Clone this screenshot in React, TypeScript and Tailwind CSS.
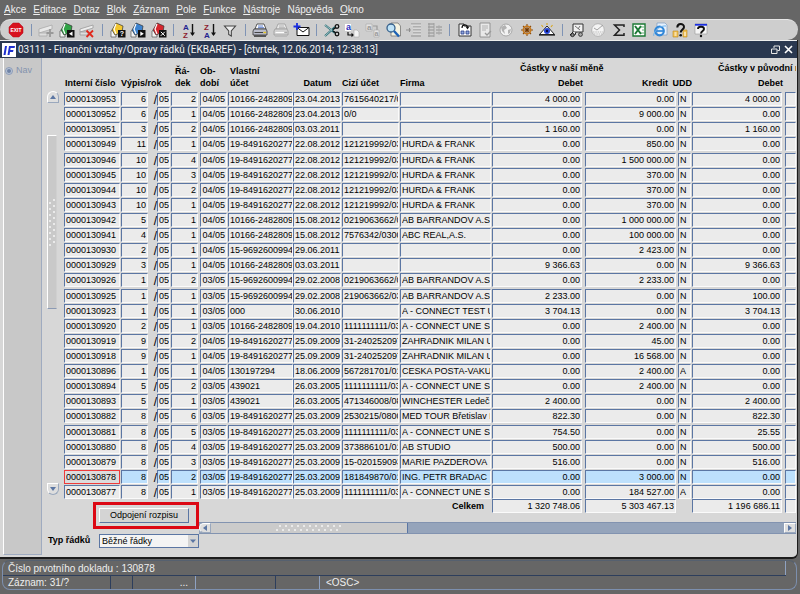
import { ReactNode } from "react";
import clsx from "clsx";

const menu = [
  ["", "A", "kce"],
  ["", "E", "ditace"],
  ["", "D", "otaz"],
  ["", "B", "lok"],
  ["", "Z", "áznam"],
  ["", "P", "ole"],
  ["", "F", "unkce"],
  ["", "N", "ástroje"],
  ["Náp", "o", "věda"],
  ["", "O", "kno"],
];

// id, vypis, radek, obdobi, vlastni ucet, datum, cizi ucet, firma, debet, kredit, udd, puvodni debet
const rows = [
  ["0000130953", "6", "2", "04/05", "10166-2482809", "23.04.2013", "7615640217/0800", "", "4 000.00", "0.00", "N", "4 000.00"],
  ["0000130952", "6", "1", "04/05", "10166-2482809", "23.04.2013", "0/0", "", "0.00", "9 000.00", "N", "0.00"],
  ["0000130951", "3", "2", "04/05", "10166-2482809", "03.03.2011", "", "", "1 160.00", "0.00", "N", "1 160.00"],
  ["0000130949", "11", "1", "04/05", "19-8491620277", "22.08.2012", "121219992/0300", "HURDA & FRANK", "0.00", "850.00", "N", "0.00"],
  ["0000130946", "10", "4", "04/05", "19-8491620277", "22.08.2012", "121219992/0300", "HURDA & FRANK", "0.00", "1 500 000.00", "N", "0.00"],
  ["0000130945", "10", "3", "04/05", "19-8491620277", "22.08.2012", "121219992/0300", "HURDA & FRANK", "0.00", "370.00", "N", "0.00"],
  ["0000130944", "10", "2", "04/05", "19-8491620277", "22.08.2012", "121219992/0300", "HURDA & FRANK", "0.00", "370.00", "N", "0.00"],
  ["0000130943", "10", "1", "04/05", "19-8491620277", "22.08.2012", "121219992/0300", "HURDA & FRANK", "0.00", "370.00", "N", "0.00"],
  ["0000130942", "5", "1", "04/05", "10166-2482809", "15.08.2012", "0219063662/0300", "AB BARRANDOV A.S.", "0.00", "1 000 000.00", "N", "0.00"],
  ["0000130941", "4", "1", "04/05", "10166-2482809", "15.08.2012", "7576342/0300", "ABC REAL,A.S.", "0.00", "100 000.00", "N", "0.00"],
  ["0000130930", "2", "1", "04/05", "15-9692600994", "29.06.2011", "", "", "0.00", "2 423.00", "N", "0.00"],
  ["0000130929", "3", "1", "04/05", "10166-2482809", "03.03.2011", "", "", "9 366.63", "0.00", "N", "9 366.63"],
  ["0000130926", "1", "2", "03/05", "15-9692600994", "29.02.2008", "0219063662/0300", "AB BARRANDOV A.S.", "0.00", "2 233.00", "N", "0.00"],
  ["0000130925", "1", "1", "03/05", "15-9692600994", "29.02.2008", "219063662/0300", "AB BARRANDOV A.S.", "2 233.00", "0.00", "N", "100.00"],
  ["0000130923", "1", "1", "03/05", "000", "30.06.2010", "", "A - CONNECT TEST UNE", "3 704.13", "0.00", "N", "3 704.13"],
  ["0000130920", "2", "1", "03/05", "10166-2482809", "19.04.2010", "1111111111/0300", "A - CONNECT UNE SPO", "0.00", "2 400.00", "N", "0.00"],
  ["0000130919", "9", "2", "04/05", "19-8491620277", "25.09.2009", "31-2402520970", "ZAHRADNIK MILAN UNG", "0.00", "45.00", "N", "0.00"],
  ["0000130918", "9", "1", "04/05", "19-8491620277", "25.09.2009", "31-2402520970", "ZAHRADNIK MILAN UNG", "0.00", "16 568.00", "N", "0.00"],
  ["0000130896", "1", "1", "04/05", "130197294", "18.06.2009", "567281701/0100", "CESKA POSTA-VAKUS", "0.00", "2 400.00", "A", "0.00"],
  ["0000130894", "5", "2", "03/05", "439021", "26.03.2005", "1111111111/0300", "A - CONNECT UNE SPO", "0.00", "2 400.00", "N", "0.00"],
  ["0000130893", "5", "1", "03/05", "439021", "26.03.2005", "471346008/0800", "WINCHESTER Ledeč", "2 400.00", "0.00", "N", "2 400.00"],
  ["0000130882", "8", "6", "03/05", "19-8491620277", "25.03.2009", "2530215/0800", "MED TOUR Břetislav Le", "822.30", "0.00", "N", "822.30"],
  ["0000130881", "8", "5", "03/05", "19-8491620277", "25.03.2009", "1111111111/0300", "A - CONNECT UNE SPO", "754.50", "0.00", "N", "25.55"],
  ["0000130880", "8", "4", "03/05", "19-8491620277", "25.03.2009", "373886101/0100", "AB STUDIO", "500.00", "0.00", "N", "500.00"],
  ["0000130879", "8", "3", "03/05", "19-8491620277", "25.03.2009", "15-0201590930", "MARIE PAZDEROVA", "516.00", "0.00", "N", "516.00"],
  ["0000130878", "8", "2", "03/05", "19-8491620277", "25.03.2009", "181849870/0100", "ING. PETR BRADAC", "0.00", "3 000.00", "N", "0.00"],
  ["0000130877", "8", "1", "03/05", "19-8491620277", "25.03.2009", "1111111111/0300", "A - CONNECT UNE SPO", "0.00", "184 527.00", "A", "0.00"],
];

const SELECTED = "0000130878";

const Svg = ({ children }: { children: ReactNode }) => (
  <svg viewBox="0 0 16 16" className="w-4 h-4 overflow-visible" aria-hidden="true">
    {children}
  </svg>
);

// folded card with a small black badge in the corner
const Card = ({ fill, badge }: { fill: string; badge: ReactNode }) => (
  <Svg>
    <path d="M1 9L4 7L6 9V15H1Z" fill="#f4f4f4" stroke="#555" strokeWidth=".7" />
    <path d="M2 8L6 1L13 4L12 10L5 13Z" fill={fill} stroke="#333" strokeWidth=".7" />
    <path d="M6 2L4 7L6 12" stroke="#fff" strokeWidth="1.2" fill="none" />
    <rect x="8" y="8" width="7.5" height="7.5" fill="#111" />
    {badge}
  </Svg>
);

const Sort = ({ top, bottom }: { top: string; bottom: string }) => (
  <Svg>
    <text x="2" y="8" fontSize="8" fontWeight="bold" fill={top === "A" ? "#23238e" : "#8c1b2f"}>{top}</text>
    <text x="2" y="15.5" fontSize="8" fontWeight="bold" fill={top === "A" ? "#8c1b2f" : "#23238e"}>{bottom}</text>
    <path d="M11.5 2V13" stroke="#111" strokeWidth="1.4" />
    <path d="M9 10.5H14L11.5 14Z" fill="#111" />
  </Svg>
);

const Printer = ({ off }: { off?: boolean }) => {
  const line = off ? "#9a9a9a" : "#333";
  return (
    <Svg>
      <path d="M5 2H12L14 7H3Z" fill={off ? "#e6e6e6" : "#fff"} stroke={line} strokeWidth=".8" />
      <path d="M6 4H11M6 5.7H12" stroke={off ? "#aaa" : "#3a62c4"} strokeWidth=".8" />
      <path d="M2 7H14L15 9V13H1V9Z" fill={off ? "#d2d2d2" : "#b9bccb"} stroke={line} strokeWidth=".8" />
      <path d="M2 13H14V15H2Z" fill={off ? "#bbb" : "#555"} />
      <path d="M2.5 10.5H11" stroke={off ? "#fff" : "#444"} />
      <path d="M11.5 10.5H14" stroke={off ? "#aaa" : "#e2c21c"} strokeWidth="1.4" />
    </Svg>
  );
};

const tools: { name: string; icon: ReactNode }[][] = [
  [
    {
      name: "Exit",
      icon: (
        <Svg>
          <path d="M5 1H11L15 5V11L11 15H5L1 11V5Z" fill="#d8101e" stroke="#b00a16" strokeWidth=".5" />
          <text x="8" y="10" fontSize="5" fontWeight="bold" textAnchor="middle" fill="#fff">EXIT</text>
        </Svg>
      ),
    },
  ],
  [
    {
      name: "Nový záznam",
      icon: (
        <Svg>
          <path d="M1 7L14 3V7L1 11Z" fill="#e9e9e9" stroke="#aaa" strokeWidth=".8" />
          <path d="M1 11H9V14H1Z" fill="#dedede" stroke="#aaa" strokeWidth=".8" />
          <path d="M12 7V15M8.5 11H15.5" stroke="#999" strokeWidth="1.8" />
        </Svg>
      ),
    },
    { name: "Uložit", icon: <Card fill="#2fa345" badge={<path d="M13.5 9.5V14L10 11.8Z" fill="#fff" />} /> },
    {
      name: "Smazat",
      icon: (
        <Svg>
          <path d="M1 7L14 3V6L1 10Z" fill="#eee" stroke="#999" strokeWidth=".8" />
          <path d="M1 10H9V13H1Z" fill="#dedede" stroke="#999" strokeWidth=".8" />
          <path d="M7.5 8.5L14 15M14 8.5L7.5 15" stroke="#e0281c" strokeWidth="1.8" />
        </Svg>
      ),
    },
  ],
  [
    {
      name: "Zadat dotaz",
      icon: <Card fill="#f3c62e" badge={<text x="11.8" y="14.4" fontSize="7" fontWeight="bold" textAnchor="middle" fill="#fff">?</text>} />,
    },
    { name: "Provést dotaz", icon: <Card fill="#3d83cf" badge={<path d="M10.3 9.5V14L13.8 11.8Z" fill="#fff" />} /> },
    { name: "Zrušit dotaz", icon: <Card fill="#d6262d" badge={<path d="M9.8 9.8L13.8 13.8M13.8 9.8L9.8 13.8" stroke="#fff" />} /> },
  ],
  [
    { name: "Seřadit vzestupně", icon: <Sort top="A" bottom="Z" /> },
    { name: "Seřadit sestupně", icon: <Sort top="Z" bottom="A" /> },
    {
      name: "Filtr",
      icon: (
        <Svg>
          <path d="M2.5 4H13.5L9.3 9V14L6.7 12.5V9Z" fill="#eee" stroke="#444" strokeWidth="1.1" />
        </Svg>
      ),
    },
  ],
  [
    { name: "Tisk", icon: <Printer /> },
    { name: "Tisk sestavy", icon: <Printer off /> },
    {
      name: "Pošta",
      icon: (
        <Svg>
          <path d="M3 5.5H15V13.5H3Z" fill="#fff" stroke="#111" />
          <path d="M3 5.5L9 10L15 5.5" fill="none" stroke="#111" />
          <path d="M3 1V8M-.5 4.5H6.5" stroke="#1a2fe0" strokeWidth="1.8" />
        </Svg>
      ),
    },
  ],
  [
    {
      name: "Vyjmout",
      icon: (
        <Svg>
          <path d="M1 3L11 11M1 14L11 5" stroke="#2b6f77" strokeWidth="2" />
          <path d="M1 3L8 8.5M1 14L8 7.5" stroke="#e8f4f4" strokeWidth=".6" fill="none" />
          <path d="M9 9L12 11M9 7.5L12 5.5" stroke="#111" strokeWidth="1.4" />
          <circle cx="13" cy="4.5" r="1.8" fill="none" stroke="#111" strokeWidth="1.3" />
          <circle cx="13" cy="12" r="1.8" fill="none" stroke="#111" strokeWidth="1.3" />
        </Svg>
      ),
    },
    {
      name: "Kopírovat",
      icon: (
        <Svg>
          <path d="M1 2H7V9H1Z" fill="#fff" />
          <text x="2" y="8" fontSize="9" fontWeight="bold" fill="#2a2fc0">a</text>
          <path d="M4 10V13H8" stroke="#111" fill="none" strokeWidth="1.2" />
          <path d="M7.5 10.8V15.2L10 13Z" fill="#111" />
          <path d="M10 8H13L15 10V15H10Z" fill="#f4f4f4" stroke="#aaa" strokeWidth=".6" />
        </Svg>
      ),
    },
    {
      name: "Vložit",
      icon: (
        <Svg>
          <path d="M1 2H7V9H1Z" fill="#e4e4e4" stroke="#aaa" strokeWidth=".6" />
          <text x="2" y="8" fontSize="8" fontWeight="bold" fill="#999">a</text>
          <path d="M8 4H12V8" stroke="#999" fill="none" strokeWidth="1.2" />
          <path d="M9 8H14V15H9Z" fill="#e4e4e4" stroke="#aaa" strokeWidth=".6" />
          <text x="9.5" y="14" fontSize="7" fontWeight="bold" fill="#999">a</text>
        </Svg>
      ),
    },
    {
      name: "Hledat",
      icon: (
        <Svg>
          <path d="M6 1H13L15.5 4V14H6Z" fill="#f6f4e2" stroke="#777" strokeWidth=".8" />
          <circle cx="6" cy="6" r="4" fill="#bfe3f7" stroke="#37618c" strokeWidth="1.3" />
          <path d="M9 9L14 14.5" stroke="#1d62b5" strokeWidth="2.4" />
        </Svg>
      ),
    },
    {
      name: "Odsadit",
      icon: (
        <Svg>
          <path d="M5 2H15M7 5H15M7 8H15M7 11H15M5 14H15" stroke="#8f8f8f" strokeWidth="1.1" />
          <path d="M0 8H5M3.5 6V10" stroke="#8f8f8f" strokeWidth="1.1" />
          <path d="M5 3H15M7 6H15M7 9H15M7 12H15" stroke="#f1f1f1" strokeWidth=".6" />
        </Svg>
      ),
    },
    {
      name: "Předsadit",
      icon: (
        <Svg>
          <path d="M1 2H7M1 5H7M1 8H7M1 11H7M1 14H7" stroke="#8f8f8f" strokeWidth="1.1" />
          <path d="M2 1V15M7 1V15" stroke="#999" strokeWidth=".8" />
          <path d="M9 5H15M9 8H15M9 11H15" stroke="#8f8f8f" strokeWidth="1.1" />
          <path d="M12 3V13" stroke="#aaa" strokeWidth=".8" />
        </Svg>
      ),
    },
  ],
  [
    {
      name: "Seznam hodnot",
      icon: (
        <Svg>
          <path d="M2 2H7V4H14V14H2Z" fill="#fff" stroke="#333" />
          <path d="M4 9H7V12H4ZM9 9H12V12H9Z" fill="#8ea6dc" stroke="#2c3e86" strokeWidth=".8" />
          <path d="M5 6C5 2 10 2 10.5 5" stroke="#111" strokeWidth="1.2" fill="none" />
          <path d="M8.5 4.5H12.5L10.5 7.5Z" fill="#111" />
        </Svg>
      ),
    },
    {
      name: "Poznámka",
      icon: (
        <Svg>
          <path d="M3 1H13V15H3Z" fill="#e9e9e9" stroke="#8d8d8d" strokeWidth=".9" />
          <path d="M5 4H11M5 6H11M5 8H9" stroke="#aaa" strokeWidth=".9" />
          <path d="M8 11L10 13L14 9" stroke="#999" strokeWidth="1.3" fill="none" />
        </Svg>
      ),
    },
    {
      name: "Web",
      icon: (
        <Svg>
          <circle cx="8" cy="8" r="6" fill="#f2f2f2" stroke="#a2a2a2" strokeWidth=".9" />
          <path d="M3 5L7 3L9 6L6 8L7 12L4 9ZM10 8L13 7L12 11L10 12Z" fill="#b2b2b2" />
        </Svg>
      ),
    },
    {
      name: "Navigátor",
      icon: (
        <Svg>
          <path d="M8 2V14M2 8H14M4 4L12 12M12 4L4 12" stroke="#8a4a0c" strokeWidth="1.1" />
          <circle cx="8" cy="8" r="3.8" fill="none" stroke="#c87a1c" strokeWidth="1.4" />
          <circle cx="8" cy="8" r="1.2" fill="#6a3606" />
        </Svg>
      ),
    },
    {
      name: "Náhled",
      icon: (
        <Svg>
          <path d="M.5 12.5L8 4L15.5 12.5Z" fill="#fff" stroke="#222" />
          <circle cx="8" cy="9" r="3" fill="#2747d8" />
          <circle cx="8" cy="9" r="1.2" fill="#0a0a40" />
          <path d="M8 3V1M4 5L2.5 3M12 5L13.5 3" stroke="#d9a81d" strokeWidth="1.1" />
          <path d="M0 13H16" stroke="#222" strokeWidth="1.3" />
        </Svg>
      ),
    },
  ],
  [
    {
      name: "Doprava",
      icon: (
        <Svg>
          <path d="M4 2H14V10H4Z" fill="#f1f1f1" stroke="#333" />
          <path d="M6 4L11 8M11 4L9 7" stroke="#666" strokeWidth=".9" />
          <path d="M4 10L1 13H6L7 10" fill="#ddd" stroke="#222" />
          <circle cx="3.5" cy="13" r="1.7" fill="#888" stroke="#111" strokeWidth=".8" />
          <circle cx="11.5" cy="12.5" r="1.9" fill="#aaa" stroke="#222" strokeWidth=".8" />
        </Svg>
      ),
    },
    {
      name: "Schválit",
      icon: (
        <Svg>
          <circle cx="8" cy="8" r="6.3" fill="#f4f4f4" stroke="#aaa" strokeWidth=".8" />
          <path d="M4 6L7 8L13 3" stroke="#a2a2a2" fill="none" />
          <path d="M3 10H13M4 12H12" stroke="#bbb" strokeWidth="1" strokeDasharray="1.5 .8" />
        </Svg>
      ),
    },
    {
      name: "Součet",
      icon: (
        <Svg>
          <path d="M13 5V3H3.5L8.5 8L3.5 13.3H13V11" fill="none" stroke="#222" strokeWidth="1.5" />
        </Svg>
      ),
    },
    {
      name: "Excel",
      icon: (
        <Svg>
          <path d="M2 2H14V14H2Z" fill="#fff" stroke="#1c7a36" strokeWidth="1.4" />
          <path d="M4 4L10 12M10 4L4 12" stroke="#1c7a36" strokeWidth="2" />
          <path d="M10 5H13M11 8H13M10 11H13" stroke="#63ad74" />
        </Svg>
      ),
    },
    {
      name: "Internet",
      icon: (
        <Svg>
          <path d="M5 1H13L15 3V13H5Z" fill="#e6f0fb" stroke="#7d9cc0" strokeWidth=".7" />
          <circle cx="7.5" cy="9" r="4.3" fill="none" stroke="#3187d8" strokeWidth="2.2" />
          <path d="M4 9H11.5" stroke="#3187d8" strokeWidth="1.7" />
          <path d="M2 14C0 12 7 3 14 4" fill="none" stroke="#6db3ee" strokeWidth="1" />
        </Svg>
      ),
    },
    {
      name: "Nápověda firmy",
      icon: (
        <Svg>
          <path d="M1 9H6V15H1ZM11 8H15V15H11Z" fill="#f0c053" stroke="#c08a20" strokeWidth=".6" />
          <path d="M2.5 11H4.5M2.5 13H4.5M12 11H14M12 13H14" stroke="#fff" />
          <path d="M5.3 5.5C5.3 1 12 1 12 5C12 7.5 8.7 7.5 8.7 10.5" fill="none" stroke="#111" strokeWidth="2" />
          <circle cx="8.7" cy="13.3" r="1.3" fill="#111" />
        </Svg>
      ),
    },
    {
      name: "Nápověda okna",
      icon: (
        <Svg>
          <path d="M2 2H14V12H2Z" fill="#f5f5f5" stroke="#999" strokeWidth=".6" />
          <path d="M2 2.8H14" stroke="#1a2fe0" strokeWidth="1.8" />
          <path d="M5 7C5 4 11 4 11 7C11 9 8 9 8 11.5" fill="none" stroke="#111" strokeWidth="1.9" />
          <circle cx="8" cy="14" r="1.2" fill="#111" />
        </Svg>
      ),
    },
  ],
];

type FieldProps = { label: string; value: string; right?: boolean; active?: boolean; current?: boolean };

function Field({ label, value, right, active, current }: FieldProps) {
  return (
    <input
      aria-label={label}
      defaultValue={value}
      className={clsx(
        "block w-full h-[14px] border rounded-none outline-none",
        right ? "text-right pr-px" : "pl-px",
        current
          ? "bg-[#dcdcdc] border-[#ee3a3a]"
          : "border-t-[#5b76a3] border-l-[#5b76a3] border-r-[#fafafa] border-b-[#fafafa]",
        !current && (active ? "bg-[#bde0fc]" : "bg-[#ebebeb]")
      )}
    />
  );
}

const Arrow = ({ d }: { d: string }) => (
  <svg viewBox="0 0 8 8" className="w-2 h-2" aria-hidden="true">
    <path d={d} fill="#5b76a3" />
  </svg>
);

const scrollButton =
  "flex items-center justify-center bg-[#dedede] border border-[#9aa8bd] border-t-white border-l-white shrink-0";

function Grips({ wide }: { wide?: boolean }) {
  const dots = wide ? 11 : 8;
  return (
    <svg
      viewBox={wide ? "0 0 66 8" : "0 0 8 48"}
      className={wide ? "w-[66px] h-2" : "w-2 h-12"}
      aria-hidden="true"
    >
      {Array.from({ length: dots }).map((_, i) =>
        wide ? (
          <g key={i} fill="#f4f4f4">
            <circle cx={i * 6 + 4} cy="2" r="1" />
            <circle cx={i * 6 + 1} cy="6" r="1" />
          </g>
        ) : (
          <g key={i} fill="#f4f4f4">
            <circle cx="6" cy={i * 6 + 2} r="1" />
            <circle cx="2" cy={i * 6 + 5} r="1" />
          </g>
        )
      )}
    </svg>
  );
}

function RecordsTable() {
  return (
    <table className="table-fixed w-full border-collapse h-[437px]">
      <colgroup>
        <col className="w-[57px]" />
        <col className="w-[28px]" />
        <col className="w-[8px]" />
        <col className="w-[14px]" />
        <col className="w-[29px]" />
        <col className="w-[28px]" />
        <col className="w-[65px]" />
        <col className="w-[49px]" />
        <col className="w-[58px]" />
        <col className="w-[92px]" />
        <col className="w-[93px]" />
        <col className="w-[93px]" />
        <col className="w-[14px]" />
        <col className="w-[93px]" />
        <col />
      </colgroup>
      <thead className="text-left align-bottom leading-[12px] whitespace-nowrap">
        <tr className="h-[14px]">
          <th rowSpan={2} className="pb-[2px] pl-px">Interní číslo</th>
          <th rowSpan={2} colSpan={3} className="pb-[2px]">Výpis/rok</th>
          <th rowSpan={2} className="pb-[2px] pl-1">Řá-<br />dek</th>
          <th rowSpan={2} className="pb-[2px]">Ob-<br />dobí</th>
          <th rowSpan={2} className="pb-[2px] pl-[2px]">Vlastní<br />účet</th>
          <th rowSpan={2} className="pb-[2px] text-center">Datum</th>
          <th rowSpan={2} className="pb-[2px]">Cizí účet</th>
          <th rowSpan={2} className="pb-[2px]">Firma</th>
          <th colSpan={2} className="pl-7 align-top">Částky v naší měně</th>
          <th rowSpan={2} className="pb-[2px]">
            <div className="flex justify-end">UDD</div>
          </th>
          <th colSpan={2} className="pl-[26px] align-top">Částky v původní měně</th>
        </tr>
        <tr className="h-[15px]">
          <th className="pb-[2px] text-right pr-[2px]">Debet</th>
          <th className="pb-[2px] text-right pr-[10px]">Kredit</th>
          <th className="pb-[2px] text-right pr-[2px]">Debet</th>
          <th></th>
        </tr>
      </thead>
      <tbody>
        {rows.map((r) => {
          const active = r[0] === SELECTED;
          return (
            <tr key={r[0]} className="align-bottom">
              <td className="pr-px"><Field label="Interní číslo" value={r[0]} active={active} current={active} /></td>
              <td className="pr-px"><Field label="Výpis" value={r[1]} right active={active} /></td>
              <td className="text-right text-xs leading-[12px]">/</td>
              <td className="pr-px"><Field label="Rok" value="05" active={active} /></td>
              <td className="pr-[2px]"><Field label="Řádek" value={r[2]} right active={active} /></td>
              <td className="pr-px"><Field label="Období" value={r[3]} right active={active} /></td>
              <td><Field label="Vlastní účet" value={r[4]} active={active} /></td>
              <td className="pr-px"><Field label="Datum" value={r[5]} active={active} /></td>
              <td className="pr-px"><Field label="Cizí účet" value={r[6]} active={active} /></td>
              <td className="pr-px"><Field label="Firma" value={r[7]} active={active} /></td>
              <td className="pr-[3px]"><Field label="Debet" value={r[8]} right active={active} /></td>
              <td className="pr-[2px]"><Field label="Kredit" value={r[9]} right active={active} /></td>
              <td className="pr-px"><Field label="UDD" value={r[10]} active={active} /></td>
              <td className="pr-[3px]"><Field label="Debet v původní měně" value={r[11]} right active={active} /></td>
              <td><Field label="Kredit v původní měně" value="" active={active} /></td>
            </tr>
          );
        })}
      </tbody>
    </table>
  );
}

export default function App() {
  return (
    <div className="min-h-screen bg-[#666666] font-['Liberation_Sans',Arial,sans-serif] text-[9px] text-black overflow-hidden">
      <nav className="flex gap-[7px] h-[19px] items-center pl-1 text-[10px] text-[#f0f0f0]">
        {menu.map(([before, key, after]) => (
          <button key={before + key + after} type="button" className="whitespace-nowrap">
            {before}
            <span className="underline">{key}</span>
            {after}
          </button>
        ))}
      </nav>

      {/* toolbar */}
      <div className="bg-[#cecece] h-[21px] rounded-xl border-t border-[#e6e6e6] mr-[2px] pl-2 flex items-center">
        <div className="flex w-[701px] justify-between items-center">
          {tools.map((group, i) => [
            i > 0 && (
              <span key={"sep" + i} className="w-[5px] flex justify-center">
                <span className="w-px h-3 bg-[#7e93b5]" />
              </span>
            ),
            ...group.map((tool) => (
              <button key={tool.name} type="button" aria-label={tool.name}>
                {tool.icon}
              </button>
            )),
          ])}
        </div>
      </div>

      {/* window */}
      <div className="mr-[2px] border-b-2 border-r border-[#1c1c1c] rounded-br-md bg-[#d7d7d7]">
        <div className="flex items-center h-[18px] bg-[#2a3850] border-t border-[#eeeeee] text-[#f2f2f2] text-[10px] font-['Roboto',Arial,sans-serif] pl-[2px] pr-1">
          <svg viewBox="0 0 14 14" className="w-[14px] h-[14px] mr-[2px] shrink-0" aria-hidden="true">
            <rect width="14" height="14" fill="#fff" />
            <path d="M3 3H5L3.5 12H1.5ZM7 3H13L12.6 5H8.6L8.3 7H11.5L11 9H8L7.5 12H5.5Z" fill="#1d2fd0" />
          </svg>
          <h1 className="flex-1 whitespace-nowrap">
            03111 - Finanční vztahy/Opravy řádků (EKBAREF) - [čtvrtek, 12.06.2014; 12:38:13]
          </h1>
          <button type="button" aria-label="Obnovit" className="mr-1">
            <svg viewBox="0 0 9 9" className="w-[9px] h-[9px]" fill="none" stroke="#e8e8e8" aria-hidden="true">
              <path d="M3 3V1H8.5V5.5H6.5M.5 4H6V8.5H.5Z" />
            </svg>
          </button>
          <button type="button" aria-label="Zavřít">
            <svg viewBox="0 0 9 9" className="w-[9px] h-[9px]" stroke="#fff" strokeWidth="1.6" aria-hidden="true">
              <path d="M1 1L8 8M8 1L1 8" />
            </svg>
          </button>
        </div>

        <div className="flex">
          <aside className="w-[42px] shrink-0 pl-[3px] pb-[2px] flex">
            <div className="flex-1 bg-[#c8c8c8] border-l border-l-white border-r border-r-[#9fabc0] border-b border-b-[#9fabc0]">
              <button type="button" className="flex items-center gap-[3px] mt-[6px] ml-px text-[#8493ae]">
                <svg viewBox="0 0 8 8" className="w-2 h-2" aria-hidden="true">
                  <circle cx="4" cy="4" r="3.5" fill="#b9c4d6" stroke="#8d9cb8" />
                  <circle cx="4" cy="4" r="2" fill="#6f83a6" />
                </svg>
                Nav
              </button>
            </div>
          </aside>

          <main className="flex-1 min-w-0 pt-1 pl-[5px] pb-[9px]">
            <div className="flex pr-px">
              {/* vertical scrollbar */}
              <div className="w-[17px] shrink-0 pt-[29px] flex flex-col">
                <button type="button" aria-label="Nahoru" className={clsx(scrollButton, "w-3 h-3 rounded-t-md")}>
                  <Arrow d="M1 6L4 2L7 6Z" />
                </button>
                <div className="flex-1 pt-8">
                  <div className="w-[10px] h-[174px] bg-[#c9c9c9] border border-l-white border-t-white border-r-[#d0d0d0] border-b-[#8b9ab4] flex items-center justify-center">
                    <Grips />
                  </div>
                </div>
                <button type="button" aria-label="Dolů" className={clsx(scrollButton, "w-3 h-3 mb-1 rounded-b-md")}>
                  <Arrow d="M1 2H7L4 6Z" />
                </button>
              </div>
              <div className="flex-1 min-w-0 overflow-hidden">
                <RecordsTable />
              </div>
            </div>

            <div className="flex pr-px">
              <div className="w-[152px] shrink-0 pt-[3px]">
                <div className="ml-[46px] border-[3px] border-[#dc0814] p-[3px]">
                  <button
                    type="button"
                    className="block w-[90px] h-[15px] bg-[#d4d4d4] border border-t-white border-l-white border-r-[#5b76a3] border-b-[#5b76a3] text-center"
                  >
                    Odpojení rozpisu
                  </button>
                </div>
                <div className="flex items-center mt-[5px]">
                  <label htmlFor="typ" className="w-[52px] shrink-0 pl-px font-bold whitespace-nowrap">
                    Typ řádků
                  </label>
                  <div className="relative flex-1">
                    <select
                      id="typ"
                      className="appearance-none block w-full h-[14px] bg-[#f4f4f4] border border-[#5b76a3] pl-[2px] rounded-none"
                    >
                      <option>Běžné řádky</option>
                    </select>
                    <span className="absolute right-px top-px h-3 w-[10px] bg-[#d4d4d4] flex items-center justify-center pointer-events-none">
                      <Arrow d="M1 2.5H7L4 6Z" />
                    </span>
                  </div>
                </div>
              </div>

              <div className="flex-1 min-w-0">
                <div className="flex justify-start">
                  <span className="w-[285px] shrink-0 font-bold text-right leading-[14px] mr-2">Celkem</span>
                  <div className="w-[90px] shrink-0 mr-[3px]"><Field label="Celkem debet" value="1 320 748.06" right /></div>
                  <div className="w-[91px] shrink-0 mr-4"><Field label="Celkem kredit" value="5 303 467.13" right /></div>
                  <div className="w-[90px] shrink-0 mr-[3px]"><Field label="Celkem debet v původní měně" value="1 196 686.11" right /></div>
                  <div className="flex-1 min-w-0"><Field label="Celkem kredit v původní měně" value="" /></div>
                </div>
                {/* horizontal scrollbar */}
                <div className="flex h-3 mt-[9px] bg-[#95a4bb] border-y border-[#8293b0]">
                  <button type="button" aria-label="Vlevo" className={clsx(scrollButton, "w-3 rounded-l-md")}>
                    <Arrow d="M6 1V7L2 4Z" />
                  </button>
                  <div className="w-[197px] bg-[#cbcbcb] border-r border-[#5b76a3] flex items-center justify-center">
                    <Grips wide />
                  </div>
                  <div className="flex-1" />
                  <button type="button" aria-label="Vpravo" className={clsx(scrollButton, "w-3")}>
                    <Arrow d="M2 1V7L6 4Z" />
                  </button>
                </div>
              </div>
            </div>
          </main>
        </div>
      </div>

      {/* status bar */}
      <footer className="ml-[2px] mr-[3px] mt-px h-[30px] border border-t-[#55606f] border-[#7c8fae] rounded-lg text-[10px] text-[#eeeeee] flex flex-col">
        <div className="flex h-[15px] mr-[10px] border-b border-[#2d3e5c]">
          <p className="flex-1 pl-[5px] leading-[15px]">Číslo prvotního dokladu : 130878</p>
          <span className="w-px bg-[#8fa2c2]" />
        </div>
        <div className="flex leading-[13px]">
          <span className="w-[108px] pl-[5px] border-r border-[#2d3e5c]">Záznam: 31/?</span>
          <span className="w-[22px] border-r border-[#2d3e5c]" />
          <span className="w-[63px] text-right pr-[7px] border-r border-[#8fa2c2]">...</span>
          <span className="w-[80px] border-r border-[#2d3e5c]" />
          <span className="w-[44px] border-r border-[#8fa2c2]" />
          <span className="pl-[6px]">&lt;OSC&gt;</span>
        </div>
      </footer>
    </div>
  );
}
